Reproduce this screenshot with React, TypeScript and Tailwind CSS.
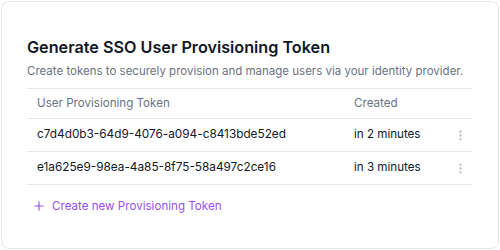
import { Plus, MoreVertical } from 'lucide-react';

const tokens = [
  { id: 'c7d4d0b3-64d9-4076-a094-c8413bde52ed', created: 'in 2 minutes' },
  { id: 'e1a625e9-98ea-4a85-8f75-58a497c2ce16', created: 'in 3 minutes' },
];

export default function App() {
  return (
    <div className="w-[500px] h-[250px] bg-white p-px font-['Inter',sans-serif]">
      <div className="h-full rounded-lg border border-[#e5e7eb] bg-white px-[25px] pt-[35px]">
        <h2 className="text-[16.2px] leading-[20px] font-semibold text-[#111827]">
          Generate SSO User Provisioning Token
        </h2>
        <p className="mt-[6px] text-[11.5px] leading-[16px] text-[#6b7280]">
          Create tokens to securely provision and manage users via your identity provider.
        </p>

        <table className="mt-[9px] w-[445px] table-fixed border-collapse text-[11.6px]">
          <thead>
            <tr className="border-t border-b border-[#e5e7eb]">
              <th className="h-[30px] pl-[10px] text-left font-normal text-[#6b7280]">
                User Provisioning Token
              </th>
              <th className="h-[30px] w-[94px] text-left font-normal text-[#6b7280]">Created</th>
              <th className="w-[24px]" />
            </tr>
          </thead>
          <tbody>
            {tokens.map((t) => (
              <tr key={t.id} className="border-b border-[#e5e7eb]">
                <td className="h-[33px] pl-[10px] text-[11.8px] text-[#111827]">{t.id}</td>
                <td className="text-[#111827]">{t.created}</td>
                <td>
                  <MoreVertical className="mx-auto h-[13px] w-[13px] text-[#b4b8bf]" strokeWidth={2.2} />
                </td>
              </tr>
            ))}
          </tbody>
        </table>

        <button className="mt-[13px] ml-[5px] flex items-center gap-[6px] text-[11.6px] leading-[16px] text-[#9a4ef0]">
          <Plus className="h-[14px] w-[14px]" strokeWidth={2} />
          Create new Provisioning Token
        </button>
      </div>
    </div>
  );
}
